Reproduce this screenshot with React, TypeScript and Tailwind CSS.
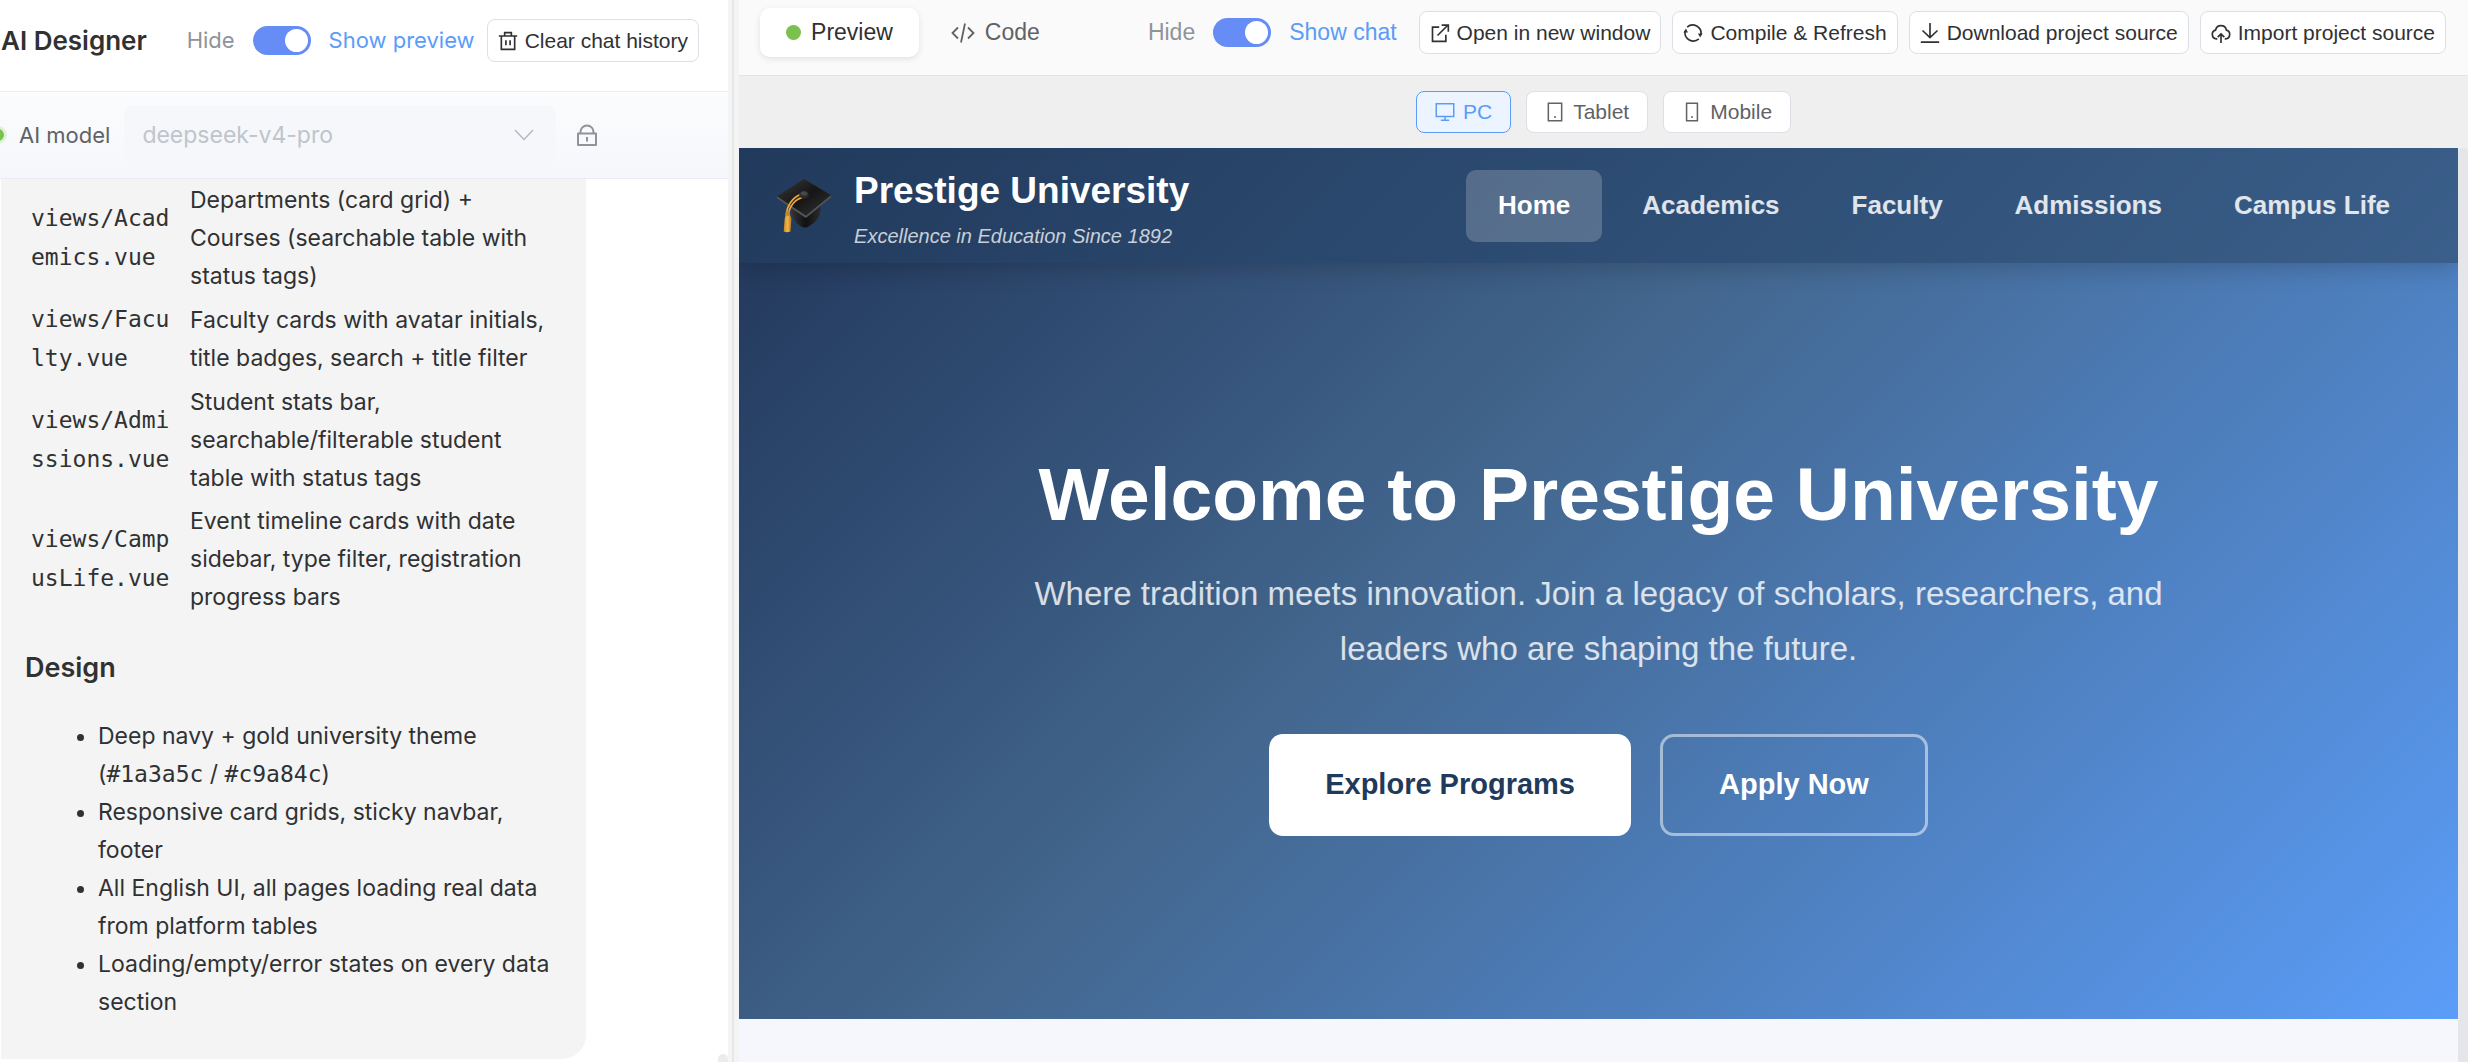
import * as React from "react";

type IconProps = { className?: string };

function TrashIcon({ className }: IconProps) {
  return (
    <svg viewBox="0 0 24 24" fill="none" stroke="currentColor" strokeWidth="2" className={className} aria-hidden="true">
      <path d="M1 6h22M4 6v16h16V6M8 6V2h8v4M9.500 11v6M14.500 11v6" />
    </svg>
  );
}

function LockIcon({ className }: IconProps) {
  return (
    <svg viewBox="0 0 24 24" fill="none" stroke="currentColor" strokeWidth="2" className={className} aria-hidden="true">
      <path d="M3 10.500h18v11.500H3zM5.500 10.500V9a6.500 6.500 0 0 1 13 0v1.500M12 14v4.500" strokeLinejoin="round" />
    </svg>
  );
}

function ChevronIcon({ className }: IconProps) {
  return (
    <svg viewBox="0 0 24 24" fill="none" stroke="currentColor" strokeWidth="1.400" className={className} aria-hidden="true">
      <path d="M3 7l9 9.500 9-9.500" />
    </svg>
  );
}

function CodeIcon({ className }: IconProps) {
  return (
    <svg viewBox="0 0 24 24" fill="none" stroke="currentColor" strokeWidth="1.800" className={className} aria-hidden="true">
      <path d="M7 6.500L1.500 12 7 17.500M17 6.500l5.500 5.500-5.500 5.500M14 2.500l-4 19" />
    </svg>
  );
}

function OpenIcon({ className }: IconProps) {
  return (
    <svg viewBox="0 0 24 24" fill="none" stroke="currentColor" strokeWidth="2" className={className} aria-hidden="true">
      <path d="M11 5H3v17h16v-8M9 15L21 3M14 2.500h8v8" />
    </svg>
  );
}

function RefreshIcon({ className }: IconProps) {
  return (
    <svg viewBox="0 0 24 24" fill="none" stroke="currentColor" strokeWidth="2" className={className} aria-hidden="true">
      <path d="M5 5A10 10 0 0 1 21.500 14M19 19A10 10 0 0 1 2.500 10" />
      <path d="M18 12.500h5.500l-3 5zM6 11.500H.5l3-5z" fill="currentColor" stroke="none" />
    </svg>
  );
}

function DownloadIcon({ className }: IconProps) {
  return (
    <svg viewBox="0 0 24 24" fill="none" stroke="currentColor" strokeWidth="2" className={className} aria-hidden="true">
      <path d="M12 0v17M3 9l9 8.500L21 9M1 23h22" />
    </svg>
  );
}

function ImportIcon({ className }: IconProps) {
  return (
    <svg viewBox="0 0 24 24" fill="none" stroke="currentColor" strokeWidth="2" className={className} aria-hidden="true">
      <path d="M7.500 19h-1a5.300 5.300 0 0 1-1-10.400 6.600 6.600 0 0 1 13 0 5.300 5.300 0 0 1-1 10.400h-1" />
      <path d="M12 24V13M8 17l4-4 4 4" />
    </svg>
  );
}

function MonitorIcon({ className }: IconProps) {
  return (
    <svg viewBox="0 0 24 24" fill="none" stroke="currentColor" strokeWidth="1.800" className={className} aria-hidden="true">
      <path d="M1.500 2h21v15.500h-21zM12 17.500v4M7 22h10" />
    </svg>
  );
}

function TabletIcon({ className }: IconProps) {
  return (
    <svg viewBox="0 0 24 24" fill="none" stroke="currentColor" strokeWidth="1.800" className={className} aria-hidden="true">
      <path d="M4 1.500h16v21H4z" />
      <circle cx="12" cy="18" r="1.200" fill="currentColor" stroke="none" />
    </svg>
  );
}

function PhoneIcon({ className }: IconProps) {
  return (
    <svg viewBox="0 0 24 24" fill="none" stroke="currentColor" strokeWidth="1.800" className={className} aria-hidden="true">
      <path d="M5.500 1.500h13v21h-13z" />
      <circle cx="12" cy="18" r="1.200" fill="currentColor" stroke="none" />
    </svg>
  );
}

function GraduationCap({ className }: IconProps) {
  return (
    <svg viewBox="0 0 60 60" className={className} aria-hidden="true">
      <defs>
        <linearGradient id="board" x1="0" y1="0" x2="1" y2="1">
          <stop offset="0" stopColor="#3a3a3a" />
          <stop offset=".5" stopColor="#161616" />
          <stop offset="1" stopColor="#333" />
        </linearGradient>
        <linearGradient id="skull" x1="0" y1="0" x2="1" y2="0">
          <stop offset="0" stopColor="#333" />
          <stop offset=".5" stopColor="#111" />
          <stop offset="1" stopColor="#2c2c2c" />
        </linearGradient>
        <linearGradient id="tassel" x1="0" y1="0" x2="1" y2="0">
          <stop offset="0" stopColor="#c98722" />
          <stop offset=".5" stopColor="#f3b548" />
          <stop offset="1" stopColor="#b8741a" />
        </linearGradient>
      </defs>
      <path d="M17 32l14 10 16-14c1 9-1 17-12 23-4 3-8 1-11-2-4-4-7-9-7-17z" fill="url(#skull)" />
      <path d="M2 20L30 2l28 17-26 21z" fill="url(#board)" />
      <path d="M2 20l30 20 26-21v2L32 42.500 2 22z" fill="#555" />
      <path d="M30 17c-8 2-15 7-18 19M32 20c-9 2-15 6-18 17" stroke="#e9a53a" strokeWidth="1.800" fill="none" />
      <ellipse cx="30" cy="18.500" rx="5" ry="4" fill="#2b2b2b" />
      <ellipse cx="30" cy="17" rx="3.500" ry="2.200" fill="#484848" />
      <path d="M11 39l4-1 2 5-1 13.500c-2 1-5 1-7 0L10 43z" fill="url(#tassel)" />
      <circle cx="13" cy="38" r="2.500" fill="#c98722" />
    </svg>
  );
}

const FILES = [
  {
    path: "views/Academics.vue",
    note: "Departments (card grid) + Courses (searchable table with status tags)",
  },
  {
    path: "views/Faculty.vue",
    note: "Faculty cards with avatar initials, title badges, search + title filter",
  },
  {
    path: "views/Admissions.vue",
    note: "Student stats bar, searchable/filterable student table with status tags",
  },
  {
    path: "views/CampusLife.vue",
    note: "Event timeline cards with date sidebar, type filter, registration progress bars",
  },
];

const ACTIONS = [
  { label: "Open in new window", icon: OpenIcon },
  { label: "Compile & Refresh", icon: RefreshIcon },
  { label: "Download project source", icon: DownloadIcon },
  { label: "Import project source", icon: ImportIcon },
];

const DEVICES = [
  { label: "PC", icon: MonitorIcon },
  { label: "Tablet", icon: TabletIcon },
  { label: "Mobile", icon: PhoneIcon },
];

const NAV = ["Home", "Academics", "Faculty", "Admissions", "Campus Life"];

export default function App() {
  return (
    <div className="flex h-screen overflow-hidden bg-white text-[#303133]">
      <ChatPanel />
      <div className="flex w-[11px] shrink-0 bg-[#f4f4f4]">
        <div className="ml-1 w-[2px] bg-[#e6e6e6]" />
      </div>
      <PreviewPanel />
    </div>
  );
}

function Toggle({
  label,
  checked,
  onChange,
}: {
  label: string;
  checked: boolean;
  onChange: (next: boolean) => void;
}) {
  return (
    <label className="flex items-center">
      <span className="text-[#909399]">Hide</span>
      <input
        type="checkbox"
        role="switch"
        checked={checked}
        onChange={(e) => onChange(e.target.checked)}
        className="peer sr-only"
      />
      <span className="mx-[18px] flex h-[29px] w-[58px] shrink-0 items-center justify-end rounded-full bg-[#668df5] px-[3px]">
        <span className="size-[23px] rounded-full bg-white" />
      </span>
      <span className="whitespace-nowrap text-[#5b9cf8]">{label}</span>
    </label>
  );
}

function ActionButton({
  label,
  icon: Icon,
}: {
  label: string;
  icon: React.ComponentType<IconProps>;
}) {
  return (
    <button
      type="button"
      className="flex h-[43px] items-center gap-[7px] rounded-lg border border-[#dcdfe6] bg-white px-[10px] font-['Liberation_Sans',Arial,sans-serif] text-[21px] whitespace-nowrap"
    >
      <Icon className="size-5" />
      {label}
    </button>
  );
}

function ChatPanel() {
  const [preview, setPreview] = React.useState(true);

  return (
    <aside className="flex w-[29.5%] shrink-0 flex-col overflow-hidden font-[Inter,sans-serif]">
      <header className="flex h-[92px] shrink-0 items-center justify-between border-b border-[#ebeef5] pr-[29px] pb-[10px] pl-px">
        <h1 className="text-[26px] font-semibold whitespace-nowrap">AI Designer</h1>
        <div className="flex items-center gap-3 text-[22px]">
          <Toggle label="Show preview" checked={preview} onChange={setPreview} />
          <ActionButton label="Clear chat history" icon={TrashIcon} />
        </div>
      </header>

      <div className="flex h-[87px] shrink-0 items-center border-b border-[#e9ecf7] bg-linear-to-b from-[#fbfcfd] to-[#f5f7fb] text-[22px]">
        <span className="-ml-2 size-3 shrink-0 rounded-full bg-[#7ac14d] ring-3 ring-[#e0f1d8]" />
        <label htmlFor="model" className="ml-[15px] whitespace-nowrap text-[#606266]">
          AI model
        </label>
        <div className="relative ml-[14px] flex h-[58px] w-[432px] items-center rounded-lg bg-[#f5f7fa]">
          <select
            id="model"
            disabled
            className="h-full w-full appearance-none bg-transparent pl-[18px] text-[23px] text-[#c0c4cc] opacity-100"
          >
            <option>deepseek-v4-pro</option>
          </select>
          <ChevronIcon className="pointer-events-none absolute right-5 size-6 text-[#b4b8c0]" />
        </div>
        <LockIcon className="ml-[19px] size-6 shrink-0 text-[#909399]" />
      </div>

      <div className="relative min-h-0 flex-1 overflow-hidden">
        <article className="ml-px w-[585px] rounded-br-3xl bg-[#f4f4f4] px-6 pt-[2px] pb-[38px] text-[23px] leading-[38px]">
          <table className="border-separate border-spacing-0">
            <tbody>
              {FILES.map((f) => (
                <tr key={f.path}>
                  <td className="w-[155px] pr-2 pb-[5px] pl-[6px] align-middle font-['DejaVu_Sans_Mono',monospace] leading-[39px] break-all">
                    {f.path}
                  </td>
                  <td className="w-[370px] pr-0 pb-[5px] pl-[10px] align-middle">{f.note}</td>
                </tr>
              ))}
            </tbody>
          </table>
          <h3 className="mt-7 text-[27px] font-semibold">Design</h3>
          <ul className="mt-[30px] list-disc pl-[73px]">
            <li>
              Deep navy + gold university theme (
              <code className="font-['DejaVu_Sans_Mono',monospace] leading-none">#1a3a5c</code> /{" "}
              <code className="font-['DejaVu_Sans_Mono',monospace] leading-none">#c9a84c</code>)
            </li>
            <li>Responsive card grids, sticky navbar, footer</li>
            <li>All English UI, all pages loading real data from platform tables</li>
            <li>Loading/empty/error states on every data section</li>
          </ul>
        </article>
        <span className="absolute right-0 bottom-0 h-2 w-[10px] rounded-t-full bg-[#ebebf0]" />
      </div>
    </aside>
  );
}

function PreviewPanel() {
  const [chat, setChat] = React.useState(true);
  const [device, setDevice] = React.useState("PC");

  return (
    <main className="flex min-w-0 flex-1 flex-col bg-[#efefef] font-['Liberation_Sans',Arial,sans-serif]">
      <header className="flex h-[76px] shrink-0 items-center justify-between border-b border-[#e4e4e4] bg-[#fafafa] pr-[22px] pb-[10px] pl-[21px]">
        <div className="flex text-[23px]">
          <button
            type="button"
            className="flex h-[49px] items-center gap-[10px] rounded-[10px] bg-white px-[26px] shadow-[0_2px_6px_rgba(0,0,0,0.1)]"
          >
            <span className="size-[15px] rounded-full bg-[#7ac14d]" />
            Preview
          </button>
          <button type="button" className="flex h-[49px] items-center gap-[10px] px-8 text-[#606266]">
            <CodeIcon className="size-6" />
            Code
          </button>
        </div>
        <div className="flex items-center gap-[11px]">
          <div className="mr-[11px] text-[23px]">
            <Toggle label="Show chat" checked={chat} onChange={setChat} />
          </div>
          {ACTIONS.map((a) => (
            <ActionButton key={a.label} label={a.label} icon={a.icon} />
          ))}
        </div>
      </header>

      <div className="flex h-[72px] shrink-0 items-center justify-center gap-[15px] text-[21px]">
        {DEVICES.map(({ label, icon: Icon }) => (
          <button
            key={label}
            type="button"
            aria-pressed={device === label}
            onClick={() => setDevice(label)}
            className={
              device === label
                ? "flex h-[42px] items-center gap-2 rounded-lg border border-[#5b9cf8] bg-[#ecf4ff] px-[18px] text-[#5b9cf8]"
                : "flex h-[42px] items-center gap-2 rounded-lg border border-[#dcdfe6] bg-white px-[18px] text-[#606266]"
            }
          >
            <Icon className="size-5" />
            {label}
          </button>
        ))}
      </div>

      <div className="flex min-h-0 flex-1">
        <div className="flex min-w-0 flex-1 flex-col overflow-hidden bg-[#f5f7fc]">
          <SiteNav />
          <Hero />
        </div>
        <div className="w-[10px] shrink-0 rounded-t bg-[#e4e6ea]" />
      </div>
    </main>
  );
}

function SiteNav() {
  return (
    <nav className="z-10 flex h-[115px] shrink-0 items-center justify-between bg-linear-135 from-[#213a5c] to-[#3a5f8a] px-9 shadow-[0_4px_24px_rgba(0,0,0,0.2)]">
      <div className="flex items-center gap-[21px] text-white">
        <GraduationCap className="size-[58px]" />
        <div>
          <div className="text-[37px] leading-[60px] font-bold">Prestige University</div>
          <div className="text-[20px] leading-[30px] text-white/75 italic">
            Excellence in Education Since 1892
          </div>
        </div>
      </div>
      <div className="flex gap-2 text-[26px] font-bold">
        {NAV.map((item, i) => (
          <a
            key={item}
            href="#"
            className={
              i === 0
                ? "flex h-[72px] items-center rounded-[10px] bg-white/20 px-8 text-white"
                : "flex h-[72px] items-center rounded-[10px] px-8 text-white/85"
            }
          >
            {item}
          </a>
        ))}
      </div>
    </nav>
  );
}

function Hero() {
  return (
    <section className="flex h-[756px] shrink-0 flex-col items-center justify-center bg-linear-135 from-[#243a5e] via-[#43678f] via-40% to-[#5b9df9] pt-[2px] text-center text-white">
      <h2 className="text-[75px] leading-[92px] font-bold">Welcome to Prestige University</h2>
      <p className="mt-[26px] w-[1160px] text-[33px] leading-[55px] text-white/80">
        Where tradition meets innovation. Join a legacy of scholars, researchers, and leaders who
        are shaping the future.
      </p>
      <div className="mt-[58px] flex gap-[29px] text-[29px] font-bold">
        <button type="button" className="h-[102px] rounded-[14px] bg-white px-14 text-[#213a5c]">
          Explore Programs
        </button>
        <button type="button" className="h-[102px] rounded-[14px] border-[3px] border-white/50 px-14">
          Apply Now
        </button>
      </div>
    </section>
  );
}
